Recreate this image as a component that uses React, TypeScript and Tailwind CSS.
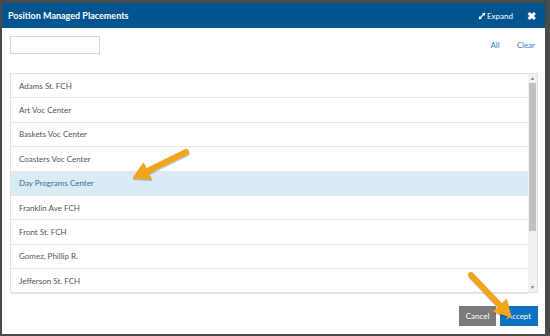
import React from "react";

const rows = [
  "Adams St. FCH",
  "Art Voc Center",
  "Baskets Voc Center",
  "Coasters Voc Center",
  "Day Programs Center",
  "Franklin Ave FCH",
  "Front St. FCH",
  "Gomez, Phillip R.",
  "Jefferson St. FCH",
];

function ArrowShape({ x1, y1, x2, y2, color }: { x1: number; y1: number; x2: number; y2: number; color: string }) {
  const a = Math.atan2(y2 - y1, x2 - x1);
  const len = 16;
  const w = 9;
  const bx = x2 - Math.cos(a) * len;
  const by = y2 - Math.sin(a) * len;
  const px = -Math.sin(a) * w;
  const py = Math.cos(a) * w;
  return (
    <g>
      <line x1={x1} y1={y1} x2={bx + Math.cos(a) * 2} y2={by + Math.sin(a) * 2} stroke={color} strokeWidth="6" strokeLinecap="round" />
      <polygon points={`${x2},${y2} ${bx + px},${by + py} ${bx - px},${by - py}`} fill={color} strokeLinejoin="round" stroke={color} strokeWidth="1" />
    </g>
  );
}

function Arrow(p: { x1: number; y1: number; x2: number; y2: number }) {
  return (
    <g>
      <g opacity="0.22">
        <ArrowShape x1={p.x1 + 0.5} y1={p.y1 + 1.5} x2={p.x2 + 0.5} y2={p.y2 + 1.5} color="#000" />
      </g>
      <ArrowShape {...p} color="#f2a51c" />
    </g>
  );
}

export default function App() {
  return (
    <div className="relative w-[550px] h-[336px] bg-[#4a4a4a] pt-[3px] pl-[2px] pr-[5px] pb-[2px]" style={{ fontFamily: "Lato, 'Open Sans', sans-serif" }}>
      <div className="flex h-full flex-col bg-white">
        <div className="flex h-[25px] shrink-0 items-center justify-between bg-[#03548f] pl-[6px] pr-[9px]">
          <span className="text-[9px] font-bold text-white">Position Managed Placements</span>
          <div className="flex items-center">
            <svg width="8" height="8" viewBox="0 0 8 8" className="mr-[1px]">
              <path d="M1 7 L7 1" stroke="white" strokeWidth="1.3" />
              <path d="M4 1 H7 V4 Z" fill="white" />
              <path d="M1 4 V7 H4 Z" fill="white" />
            </svg>
            <span className="text-[8px] text-white">Expand</span>
            <span className="ml-[14px] text-[11px] font-bold leading-none text-white">✖</span>
          </div>
        </div>

        <div className="flex flex-1 flex-col pl-[8px] pr-[7px]">
          <div className="mt-[8px] flex items-center justify-between">
            <div className="h-[18px] w-[90px] border border-[#d6d6d6]" />
            <div className="flex gap-[17px] pr-[3px] text-[8px] text-[#3b7dc0]">
              <span>All</span>
              <span>Clear</span>
            </div>
          </div>

          <div className="mt-[19px] flex h-[220px] border border-[#e2e2e2]">
            <div className="flex-1">
              {rows.map((r) => (
                <div
                  key={r}
                  className={
                    r === "Day Programs Center"
                      ? "flex h-[24.4px] items-center border-b border-[#e6e6e6] bg-[#d9ebf5] pl-[8px] text-[8px] text-[#3a6f94]"
                      : "flex h-[24.4px] items-center border-b border-[#e6e6e6] pl-[8px] text-[8px] text-[#555555]"
                  }
                >
                  {r}
                </div>
              ))}
            </div>
            <div className="flex w-[9px] flex-col items-center bg-[#f1f1f1]">
              <div className="flex h-[9px] items-center justify-center text-[5px] text-[#777]">▲</div>
              <div className="h-[148px] w-[7px] bg-[#c1c1c1]" />
              <div className="flex-1" />
              <div className="flex h-[9px] items-center justify-center text-[5px] text-[#777]">▼</div>
            </div>
          </div>

          <div className="mt-[13px] flex justify-end gap-[4px]">
            <div className="flex h-[20px] w-[37px] items-center justify-center bg-[#7b7b7b] text-[8px] text-white">Cancel</div>
            <div className="flex h-[20px] w-[38px] items-center justify-center bg-[#0a72bf] text-[8px] text-white">Accept</div>
          </div>
        </div>
      </div>

      <svg className="pointer-events-none absolute left-0 top-0" width="550" height="336">
        <Arrow x1={186} y1={152} x2={133} y2={178} />
        <Arrow x1={471} y1={275} x2={511} y2={317} />
      </svg>
    </div>
  );
}
